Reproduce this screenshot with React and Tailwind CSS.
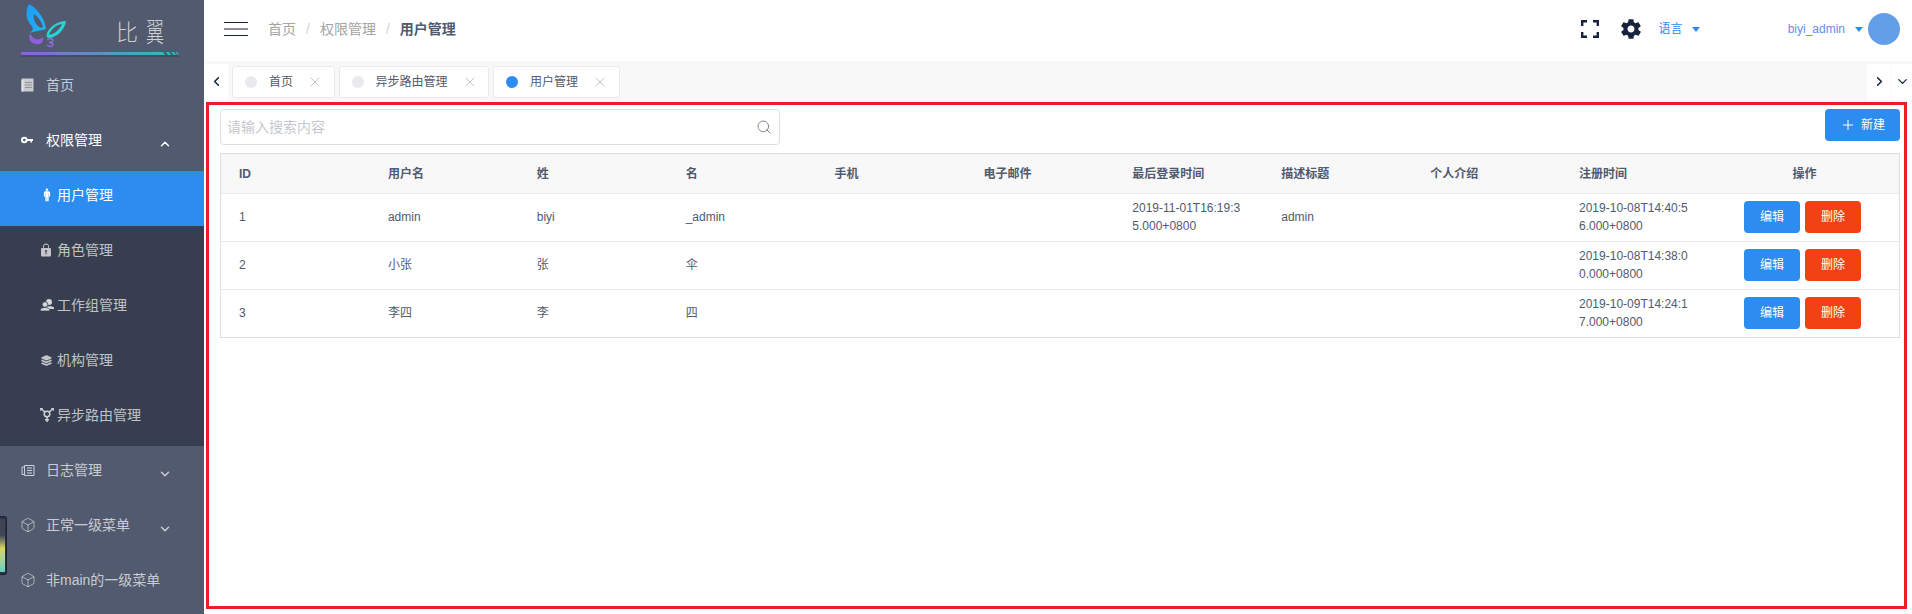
import { Search, Plus, X, Box, ChevronLeft, ChevronRight, ChevronDown, ChevronUp } from 'lucide-react';
import { IoIosMan, IoIosLock, IoMdSettings } from 'react-icons/io';
import { IoLayers } from 'react-icons/io5';

// ionicons-style glyphs the packages don't have in this shape
const PaperIcon = () => (
  <svg width="13" height="14" viewBox="0 0 13 14">
    <rect x="0.500" y="0.500" width="12" height="13" rx="0.500" fill="#c9cbcf" />
    <rect x="0.500" y="2" width="2" height="11.500" fill="#e4e4e4" />
    <path d="M4 4.500 H11 M4 7 H11 M4 9.500 H11" stroke="#8f949f" strokeWidth="1" />
  </svg>
);

const KeyIcon = () => (
  <svg width="12" height="14" viewBox="0 0 12 14">
    <circle cx="3.300" cy="7" r="2.300" fill="none" stroke="#fff" strokeWidth="2" />
    <path d="M5.500 6 H12 V8 H11 V9.500 H9.500 V8 H5.500 Z" fill="#fff" />
  </svg>
);

const PeopleIcon = () => (
  <svg width="14" height="14" viewBox="0 0 14 14" fill="#d4d6da">
    <circle cx="9" cy="4" r="3" />
    <path d="M5 9.500 C6 8 12 7.500 14 9.500 V11 H7 Z" />
    <circle cx="5" cy="6.500" r="2.800" stroke="#363e4f" strokeWidth="0.800" />
    <path d="M0 13 C0 10 3 9.500 5 9.500 C7 9.500 10 10 10 13 Z" stroke="#363e4f" strokeWidth="0.800" />
  </svg>
);

const TransIcon = () => (
  <svg width="14" height="14" viewBox="0 0 14 14" fill="none" stroke="#d0d2d6" strokeWidth="1.500">
    <circle cx="7" cy="6" r="2.800" />
    <path d="M7 9 V14 M5 11.800 H9 M4.900 3.900 L1 1 M9.100 3.900 L13 1" />
    <path d="M0 3 V0.500 H2.800 M11.200 0.500 H14 V3" />
  </svg>
);

const JournalIcon = () => (
  <svg width="14" height="14" viewBox="0 0 14 14" fill="none" stroke="#c9d3df" strokeWidth="1">
    <path d="M3.500 2.500 H13 V12.500 H3.500 Z" />
    <path d="M3.500 4 H1 V11.500 H3.500" />
    <path d="M6 5 H11 M6 7.500 H11 M6 10 H11" strokeWidth="1.200" />
  </svg>
);

const CubeIcon = () => <Box size={16} strokeWidth={1.1} className="-ml-[1px]" />;

const subMenu = [
  { label: '用户管理', icon: <IoIosMan size={14} />, active: true },
  { label: '角色管理', icon: <IoIosLock size={16} className="-ml-[2px]" /> },
  { label: '工作组管理', icon: <PeopleIcon /> },
  { label: '机构管理', icon: <IoLayers size={13} /> },
  { label: '异步路由管理', icon: <TransIcon /> },
];

const tags = [
  { label: '首页' },
  { label: '异步路由管理' },
  { label: '用户管理', active: true },
];

const columns = ['ID', '用户名', '姓', '名', '手机', '电子邮件', '最后登录时间', '描述标题', '个人介绍', '注册时间'];

const users = [
  ['1', 'admin', 'biyi', '_admin', '', '', '2019-11-01T16:19:35.000+0800', 'admin', '', '2019-10-08T14:40:56.000+0800'],
  ['2', '小张', '张', '伞', '', '', '', '', '', '2019-10-08T14:38:00.000+0800'],
  ['3', '李四', '李', '四', '', '', '', '', '', '2019-10-09T14:24:17.000+0800'],
];

function Logo() {
  return (
    <div className="relative h-[61px] shrink-0">
      <svg width="204" height="61" viewBox="0 0 204 61" className="block">
        <defs>
          <linearGradient id="bar" x1="0" x2="1" y1="0" y2="0">
            <stop offset="0" stopColor="#8f5fd8" />
            <stop offset="1" stopColor="#2fb9bb" />
          </linearGradient>
          <linearGradient id="wing" x1="0" x2="1" y1="0" y2="1">
            <stop offset="0" stopColor="#1a9bff" />
            <stop offset="1" stopColor="#25b4e8" />
          </linearGradient>
        </defs>
        <path fillRule="evenodd" fill="url(#wing)" d="M29 4 C25 11 26 20 31 25 C34 29 33 30 30 33 C35 31 40 31 46 29 C45 19 38 9 29 4 Z M34 14 C33 19 35 23 38 26 C40 28 41 28 43 27 C42 22 38 17 34 14 Z" />
        <path fillRule="evenodd" fill="#8f5fe0" d="M30 34 C28 38 30 43 36 44 C41 45 44 42 43 37 C41 39 38 40 35 39 C33 38 32 36 30 34 Z" />
        <path fillRule="evenodd" fill="#28d3d3" d="M66 21 C58 21 50 26 47 33 C46 36 47 38 49 38 C56 38 65 30 66 21 Z M62 24 C56 25 51 29 49 35 C54 34 60 30 62 24 Z" />
        <path fill="none" stroke="#8f6fe0" strokeWidth="1.300" d="M47 40 C50 38 54 39 53 41 C52 43 50 42 49 42 M50 43 C53 43 54 45 52 46 C50 47 48 46 47 45" />
        <rect x="21" y="55" width="158" height="2" fill="#3e4557" opacity="0.6" />
        <path fill="url(#bar)" d="M21 52 H163 L165 55 H21 Z" />
        <path fill="#2fb9bb" d="M166 52 H169 L171 55 H168 Z M171.500 52 H174 L176 55 H173.500 Z M175.500 52 H177 L179 55 H177.500 Z" />
      </svg>
      <span className="absolute left-[116px] top-[17px] flex gap-[8px] leading-[32px] font-light text-[#cfd0d3]">
        <span className="text-[22px]">比</span>
        <span className="text-[18px] scale-y-[1.5]">翼</span>
      </span>
    </div>
  );
}

function TopItem({ icon, label, chevron, open }) {
  return (
    <div className={`flex items-center h-[55px] pl-[21px] pb-[7px] text-sm ${open ? 'text-white' : 'text-white/70'}`}>
      <span className="w-[25px] flex items-center">{icon}</span>
      <span className="flex-1">{label}</span>
      {chevron === 'up' && <ChevronUp size={14} strokeWidth={2.5} className="mr-[32px] mt-[7px]" />}
      {chevron === 'down' && <ChevronDown size={14} strokeWidth={2.5} className="mr-[32px] mt-[7px]" />}
    </div>
  );
}

function Sidebar() {
  return (
    <aside className="relative w-[204px] shrink-0 bg-[#515a6e] overflow-hidden">
      <Logo />
      <TopItem icon={<PaperIcon />} label="首页" />
      <TopItem icon={<KeyIcon />} label="权限管理" chevron="up" open />
      <div className="bg-[#363e4f]">
        {subMenu.map((item) => (
          <div
            key={item.label}
            className={`flex items-center h-[55px] pl-[40px] pb-[7px] text-sm ${item.active ? 'bg-[#2d8cf0] text-white' : 'text-white/70'}`}
          >
            <span className="w-[17px] flex items-center">{item.icon}</span>
            {item.label}
          </div>
        ))}
      </div>
      <TopItem icon={<JournalIcon />} label="日志管理" chevron="down" />
      <TopItem icon={<CubeIcon />} label="正常一级菜单" chevron="down" />
      <TopItem icon={<CubeIcon />} label="非main的一级菜单" />
      <div className="absolute left-0 top-[516px] w-[7px] h-[59px] bg-[#2b3242] border border-l-0 border-[#1c2230] rounded-r-[3px] py-[2px] pr-[1px]">
        <div className="h-full bg-gradient-to-b from-[#3d4453] from-30% via-[#d8d36a] via-55% to-[#5fd0c0]" />
      </div>
    </aside>
  );
}

function Header() {
  return (
    <header className="flex items-center h-[61px] pb-[3px] shrink-0 bg-white">
      <div className="ml-[20px] w-[24px] h-[14px] flex flex-col justify-between">
        <span className="block h-[1px] bg-[#17233d]" />
        <span className="block h-[2px] bg-[#918a95]" />
        <span className="block h-[1px] bg-[#17233d]" />
      </div>
      <nav className="ml-[20px] flex items-center text-sm text-[#a4a4a4]">
        <span>首页</span>
        <span className="mx-[10px] text-[#d4d4d4]">/</span>
        <span>权限管理</span>
        <span className="mx-[10px] text-[#d4d4d4]">/</span>
        <span className="font-bold text-[#515a6e]">用户管理</span>
      </nav>
      <div className="flex-1" />
      <svg width="18" height="18" viewBox="0 0 18 18" fill="none" stroke="#17233d" strokeWidth="2.400" className="mr-[20px]">
        <path d="M1.200 6 V1.200 H6 M12 1.200 H16.800 V6 M16.800 12 V16.800 H12 M6 16.800 H1.200 V12" />
      </svg>
      <IoMdSettings size={24} className="text-[#17233d] mr-[16px]" />
      <span className="text-xs text-[#2d8cf0]">语言</span>
      <span className="ml-[9px] w-0 h-0 border-x-[4.5px] border-x-transparent border-t-[5px] border-t-[#2d8cf0]" />
      <span className="ml-[88px] text-xs text-[#5b8ff0]">biyi_admin</span>
      <span className="ml-[10px] w-0 h-0 border-x-[4.5px] border-x-transparent border-t-[5px] border-t-[#2d8cf0]" />
      <span className="ml-[5px] mr-[12px] w-[32px] h-[32px] rounded-full bg-[#629fe6]" />
    </header>
  );
}

function TagBar() {
  return (
    <div className="flex items-center h-[41px] shrink-0 bg-[#f8f8f8]">
      <button className="w-[24px] h-[36px] bg-white flex items-center justify-center text-[#17233d]">
        <ChevronLeft size={15} strokeWidth={2.5} />
      </button>
      <div className="flex-1 flex items-center gap-[4px] pl-[4px]">
        {tags.map((tag) => (
          <div
            key={tag.label}
            className="flex items-center h-[32px] pl-[12px] pr-[10.5px] bg-white border border-[#e8eaec] rounded-[3px] text-xs text-[#515a6e]"
          >
            <span className={`w-[12px] h-[12px] rounded-full mr-[12px] ${tag.active ? 'bg-[#2d8cf0]' : 'bg-[#e8eaec]'}`} />
            <span>{tag.label}</span>
            <X size={16} strokeWidth={1} className="ml-[14px] text-[#a8a8a8]" />
          </div>
        ))}
      </div>
      <button className="w-[24px] h-[36px] bg-white flex items-center justify-center text-[#17233d]">
        <ChevronRight size={15} strokeWidth={2.5} />
      </button>
      <button className="ml-[1px] w-[20px] h-[36px] bg-white flex items-center justify-center text-[#17233d]">
        <ChevronDown size={15} strokeWidth={2} />
      </button>
    </div>
  );
}

function UserTable() {
  return (
    <div className="border border-[#dcdee2]">
      <table className="w-full table-fixed text-xs text-[#515a6e]">
        <colgroup>
          {columns.map((col) => (
            <col key={col} className="w-[148.9px]" />
          ))}
          <col />
        </colgroup>
        <thead>
          <tr className="h-[39px] bg-[#f8f8f9] border-b border-[#e8eaec]">
            {columns.map((col) => (
              <th key={col} className="px-[18px] pt-[1px] text-left font-bold">
                {col}
              </th>
            ))}
            <th className="pt-[1px] text-center font-bold">操作</th>
          </tr>
        </thead>
        <tbody>
          {users.map((row) => (
            <tr key={row[0]} className="h-[48px] border-b border-[#e8eaec] last:border-b-0">
              {row.map((cell, i) => (
                <td key={i} className="px-[18px] leading-[18px] break-all">
                  {cell}
                </td>
              ))}
              <td className="pl-[1px] text-center">
                <button className="w-[56px] h-[32px] mr-[5px] rounded-[4px] bg-[#2d8cf0] text-white">编辑</button>
                <button className="w-[56px] h-[32px] mr-[5px] rounded-[4px] bg-[#f04215] text-white">删除</button>
              </td>
            </tr>
          ))}
        </tbody>
      </table>
    </div>
  );
}

export default function App() {
  return (
    <div className="flex h-screen bg-white overflow-hidden font-['Liberation_Sans','Noto_Sans_CJK_SC',sans-serif]">
      <Sidebar />
      <main className="flex-1 flex flex-col min-w-0">
        <Header />
        <TagBar />
        <section className="flex-1 ml-[2px] mr-[5px] mb-[5px] border-[3px] border-[#ee1c25] pt-[4px] pl-[11px] pr-[4px]">
          <div className="flex justify-between items-start h-[36px] mb-[8px]">
            <div className="relative w-[560px] h-[36px] flex items-center pl-[6px] border border-[#dcdee2] rounded-[4px] text-sm text-[#c5c8ce]">
              请输入搜索内容
              <Search size={16} strokeWidth={1.5} className="absolute right-[7px] top-[9px] text-[#808695]" />
            </div>
            <button className="flex items-center w-[75px] h-[32px] pl-[15px] rounded-[4px] bg-[#2d8cf0] text-xs text-white">
              <Plus size={16} strokeWidth={1.5} />
              <span className="ml-[5px]">新建</span>
            </button>
          </div>
          <UserTable />
        </section>
      </main>
    </div>
  );
}
